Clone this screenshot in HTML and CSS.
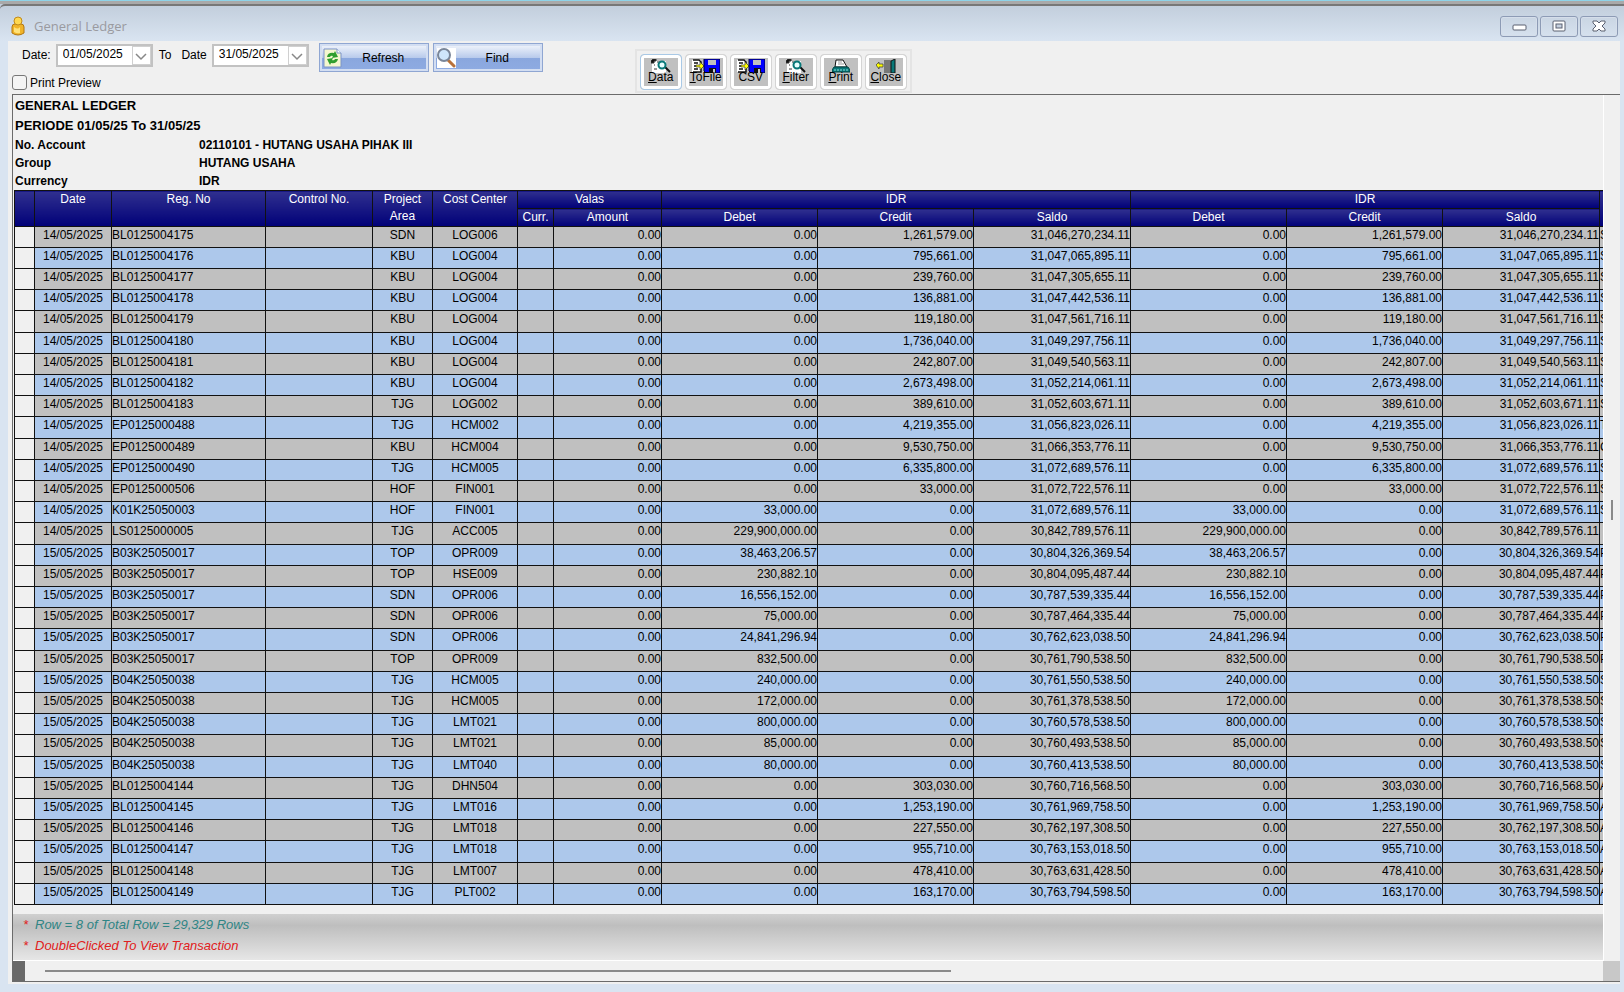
FILE: index.html
```
<!DOCTYPE html>
<html lang="en">
<head>
    <meta charset="UTF-8">
    <meta name="viewport" content="width=device-width, initial-scale=1.0">
    <title>General Ledger</title>
    <link rel="stylesheet" href="styles.css">
</head>
<body>
    <svg width="0" height="0" class="sprite">
        <symbol id="i-preview" viewBox="0 0 20 14">
            <path d="M1 4l3-2h11v12H1z" fill="#fff"/>
            <path d="M0 4V2l2-2h3v2H3v2zM6 3h3M3 6h1M3 10h3" fill="#111" stroke="#333"/>
            <path d="M14 8l5 5" stroke="#111" stroke-width="2"/>
            <circle cx="11" cy="6" r="3.5" fill="#e8ffff" stroke="#087878" stroke-width="2"/>
        </symbol>
        <symbol id="i-save" viewBox="0 0 28 14">
            <path d="M0 1h9v12H0z" fill="#fff"/>
            <path d="M1 1h6l2 2v10H1M2 4h4M2 7h4M2 10h4" fill="none" stroke="#111" stroke-width="1.5"/>
            <path d="M4 6h4V3l4 4-4 4V8H4z" fill="#ff0" stroke="#333" stroke-width=".7"/>
            <path d="M12 0h16v14H14l-2-2z" fill="#00f" stroke="#003"/>
            <path d="M16 1h8v5h-8z" fill="#c0c0c0"/>
            <path d="M17 9h7v5h-7z" fill="#111"/>
            <path d="M21 10h2v4h-2z" fill="#c8c8d0"/>
        </symbol>
        <symbol id="i-print" viewBox="0 0 18 14">
            <path d="M4 1h7l4 7H3z" fill="#fff" stroke="#111"/>
            <path d="M6 3h4M6 5h6" stroke="#999"/>
            <path d="M2 8h14l2 3v2H0v-2z" fill="#087878" stroke="#044"/>
            <path d="M2 11h14" stroke="#8dd" stroke-dasharray="2 1"/>
        </symbol>
        <symbol id="i-close" viewBox="0 0 20 14">
            <path d="M0 6l3-3v2h4v3H3v2z" fill="#ff0" stroke="#333" stroke-width=".7"/>
            <path d="M8 1h7v13H8z" fill="#777"/>
            <path d="M15 2l4-2v14h-4z" fill="#087878" stroke="#111"/>
        </symbol>
    </svg>

    <div class="window">
        <header class="titlebar">
            <svg class="app-icon" width="14" height="20" viewBox="0 0 14 20">
                <path d="M1 11Q1 8 4 8h6q3 0 3 3v6q-6 4-12 0z" fill="#f0b429" stroke="#b27712"/>
                <circle cx="7" cy="5" r="4" fill="#ffd84f" stroke="#c08a1c"/>
                <path d="M3 11q4 3 6 0v6q-3 1-6-1z" fill="#ffe27a"/>
            </svg>
            <h1>General Ledger</h1>
            <div class="win-buttons">
                <button type="button" aria-label="Minimize"><svg width="15" height="12" viewBox="0 0 15 12"><rect x="1" y="5" width="13" height="5" rx="1" fill="#fff" stroke="#5b6070"/></svg></button>
                <button type="button" aria-label="Restore"><svg width="15" height="12" viewBox="0 0 15 12"><rect x="1" y="1" width="12" height="10" rx="1" fill="#fff" stroke="#5b6070"/><rect x="4" y="4" width="6" height="4" fill="#c5d0df" stroke="#5b6070"/></svg></button>
                <button type="button" aria-label="Close"><svg width="15" height="12" viewBox="0 0 15 12"><path d="M1 1h4l2 2 2-2h4v2l-3 3 3 3v2H9L7 9l-2 2H1V9l3-3-3-3z" fill="#fff" stroke="#5b6070"/></svg></button>
            </div>
        </header>

        <main class="client">
            <div class="controls">
                <div class="filters">
                    <div class="filter-row">
                        <label for="dateFrom">Date:</label>
                        <span class="combo">
                            <input type="text" id="dateFrom" value="01/05/2025">
                            <button type="button" aria-label="Open start date"><svg width="12" height="8" viewBox="0 0 12 8"><path d="M1 1l5 5 5-5" fill="none" stroke="#888" stroke-width="1.5"/></svg></button>
                        </span>
                        <label for="dateTo" class="to"><span>To</span><span>Date</span></label>
                        <span class="combo">
                            <input type="text" id="dateTo" value="31/05/2025">
                            <button type="button" aria-label="Open end date"><svg width="12" height="8" viewBox="0 0 12 8"><path d="M1 1l5 5 5-5" fill="none" stroke="#888" stroke-width="1.5"/></svg></button>
                        </span>
                    </div>
                    <label class="preview"><input type="checkbox"> Print Preview</label>
                </div>
                <div class="actions">
                    <button type="button" class="action">
                        <svg width="19" height="20" viewBox="0 0 19 20">
                            <path d="M1 1h13l4 4v14H1z" fill="#f4f7cf" stroke="#7d93c8"/>
                            <path d="M14 1v4h4" fill="#fff" stroke="#7d93c8"/>
                            <path d="M4 9q1-5 7-4l1-2 3 6-6 1 1-2q-2-1-3 1zM15 11q-1 5-7 4l-1 2-3-6 6-1-1 2q2 1 3-1z" fill="#2f9e2f"/>
                        </svg>
                        <span>Refresh</span>
                    </button>
                    <button type="button" class="action">
                        <svg width="19" height="20" viewBox="0 0 19 20">
                            <path d="M0 0h19v20H0z" fill="#fff"/>
                            <path d="M11 12l6 6" stroke="#b8713a" stroke-width="3" stroke-linecap="round"/>
                            <circle cx="7" cy="7" r="6" fill="#cfe6fb" stroke="#7a8699" stroke-width="2"/>
                        </svg>
                        <span>Find</span>
                    </button>
                </div>
                <div class="toolbar">
                    <button type="button" class="tool focused"><svg width="20" height="14"><use href="#i-preview"/></svg><span><u>D</u>ata</span></button>
                    <button type="button" class="tool"><svg width="28" height="14"><use href="#i-save"/></svg><span><u>T</u>oFile</span></button>
                    <button type="button" class="tool"><svg width="28" height="14"><use href="#i-save"/></svg><span>CSV</span></button>
                    <button type="button" class="tool"><svg width="20" height="14"><use href="#i-preview"/></svg><span><u>F</u>ilter</span></button>
                    <button type="button" class="tool"><svg width="18" height="14"><use href="#i-print"/></svg><span><u>P</u>rint</span></button>
                    <button type="button" class="tool"><svg width="20" height="14"><use href="#i-close"/></svg><span><u>C</u>lose</span></button>
                </div>
            </div>

            <div class="report">
                <div class="sheet">
                    <h2>GENERAL LEDGER</h2>
                    <h2>PERIODE 01/05/25 To 31/05/25</h2>
                    <dl class="info">
                        <dt>No. Account</dt><dd>02110101 - HUTANG USAHA PIHAK III</dd>
                        <dt>Group</dt><dd>HUTANG USAHA</dd>
                        <dt>Currency</dt><dd>IDR</dd>
                    </dl>
                    <table class="ledger">
                        <colgroup>
                            <col class="c-mark"><col class="c-date"><col class="c-reg"><col class="c-control"><col class="c-area"><col class="c-cost"><col class="c-curr"><col class="c-amount">
                            <col class="c-money"><col class="c-money"><col class="c-saldo"><col class="c-money"><col class="c-money"><col class="c-saldo">
                            <col class="c-desc">
                        </colgroup>
                        <thead>
                            <tr>
                                <th rowspan="2"></th>
                                <th rowspan="2">Date</th>
                                <th rowspan="2">Reg. No</th>
                                <th rowspan="2">Control No.</th>
                                <th rowspan="2">Project Area</th>
                                <th rowspan="2">Cost Center</th>
                                <th colspan="2">Valas</th>
                                <th colspan="3">IDR</th>
                                <th colspan="3">IDR</th>
                                <th rowspan="2"></th>
                            </tr>
                            <tr>
                                <th>Curr.</th><th>Amount</th>
                                <th>Debet</th><th>Credit</th><th>Saldo</th>
                                <th>Debet</th><th>Credit</th><th>Saldo</th>
                            </tr>
                        </thead>
                        <tbody id="rows"></tbody>
                    </table>
                    <footer class="notes">
                        <p class="count"><b>*</b>Row = 8 of Total Row = 29,329 Rows</p>
                        <p class="hint"><b>*</b>DoubleClicked To View Transaction</p>
                    </footer>
                </div>
                <div class="vscroll"><span></span></div>
                <div class="hscroll"><i></i><span></span></div>
                <div class="corner"></div>
            </div>
        </main>
    </div>

    <script>
        // date, reg. no, area, cost center, debet, credit, saldo, description
        const entries = `
14/05/2025|BL0125004175|SDN|LOG006|0.00|1,261,579.00|31,046,270,234.11|S
14/05/2025|BL0125004176|KBU|LOG004|0.00|795,661.00|31,047,065,895.11|S
14/05/2025|BL0125004177|KBU|LOG004|0.00|239,760.00|31,047,305,655.11|S
14/05/2025|BL0125004178|KBU|LOG004|0.00|136,881.00|31,047,442,536.11|S
14/05/2025|BL0125004179|KBU|LOG004|0.00|119,180.00|31,047,561,716.11|S
14/05/2025|BL0125004180|KBU|LOG004|0.00|1,736,040.00|31,049,297,756.11|S
14/05/2025|BL0125004181|KBU|LOG004|0.00|242,807.00|31,049,540,563.11|S
14/05/2025|BL0125004182|KBU|LOG004|0.00|2,673,498.00|31,052,214,061.11|S
14/05/2025|BL0125004183|TJG|LOG002|0.00|389,610.00|31,052,603,671.11|S
14/05/2025|EP0125000488|TJG|HCM002|0.00|4,219,355.00|31,056,823,026.11|T
14/05/2025|EP0125000489|KBU|HCM004|0.00|9,530,750.00|31,066,353,776.11|C
14/05/2025|EP0125000490|TJG|HCM005|0.00|6,335,800.00|31,072,689,576.11|S
14/05/2025|EP0125000506|HOF|FIN001|0.00|33,000.00|31,072,722,576.11|S
14/05/2025|K01K25050003|HOF|FIN001|33,000.00|0.00|31,072,689,576.11|S
14/05/2025|LS0125000005|TJG|ACC005|229,900,000.00|0.00|30,842,789,576.11|
15/05/2025|B03K25050017|TOP|OPR009|38,463,206.57|0.00|30,804,326,369.54|P
15/05/2025|B03K25050017|TOP|HSE009|230,882.10|0.00|30,804,095,487.44|P
15/05/2025|B03K25050017|SDN|OPR006|16,556,152.00|0.00|30,787,539,335.44|P
15/05/2025|B03K25050017|SDN|OPR006|75,000.00|0.00|30,787,464,335.44|P
15/05/2025|B03K25050017|SDN|OPR006|24,841,296.94|0.00|30,762,623,038.50|P
15/05/2025|B03K25050017|TOP|OPR009|832,500.00|0.00|30,761,790,538.50|P
15/05/2025|B04K25050038|TJG|HCM005|240,000.00|0.00|30,761,550,538.50|S
15/05/2025|B04K25050038|TJG|HCM005|172,000.00|0.00|30,761,378,538.50|S
15/05/2025|B04K25050038|TJG|LMT021|800,000.00|0.00|30,760,578,538.50|S
15/05/2025|B04K25050038|TJG|LMT021|85,000.00|0.00|30,760,493,538.50|S
15/05/2025|B04K25050038|TJG|LMT040|80,000.00|0.00|30,760,413,538.50|S
15/05/2025|BL0125004144|TJG|DHN504|0.00|303,030.00|30,760,716,568.50|A
15/05/2025|BL0125004145|TJG|LMT016|0.00|1,253,190.00|30,761,969,758.50|A
15/05/2025|BL0125004146|TJG|LMT018|0.00|227,550.00|30,762,197,308.50|A
15/05/2025|BL0125004147|TJG|LMT018|0.00|955,710.00|30,763,153,018.50|A
15/05/2025|BL0125004148|TJG|LMT007|0.00|478,410.00|30,763,631,428.50|A
15/05/2025|BL0125004149|TJG|PLT002|0.00|163,170.00|30,763,794,598.50|A`;

        document.getElementById('rows').innerHTML = entries.trim().split('\n').map(line => {
            const [date, reg, area, cost, debet, credit, saldo, desc] = line.split('|');
            const money = [debet, credit, saldo].map(v => `<td class="num">${v}</td>`).join('');
            return `<tr><td class="mark"></td><td class="mid">${date}</td><td>${reg}</td><td></td>` +
                `<td class="mid">${area}</td><td class="mid">${cost}</td><td></td><td class="num">0.00</td>` +
                `${money}${money}<td>${desc}</td></tr>`;
        }).join('');
    </script>
</body>
</html>
```

FILE: styles.css
```
* {
    box-sizing: border-box;
}
body {
    margin: 0;
    height: 100vh;
    background: #d9e4f1;
    color: #000;
    font-family: "Liberation Sans", Arial, sans-serif;
    font-size: 12px;
    overflow: hidden;
}
button, input {
    font: inherit;
    color: inherit;
}
button {
    padding: 0;
}
h1, h2, dl, dd, p {
    margin: 0;
}
.sprite {
    position: absolute;
}
.window {
    display: flex;
    flex-direction: column;
    height: 100%;
    padding: 4px 4px 8px 8px;
    background: linear-gradient(#8fd3e8 1px, #a9a9a9 1px, #a9a9a9 4px, #c1cddb 4px, #d9e4f1 41px);
}
/* title bar */
.titlebar {
    display: flex;
    align-items: center;
    height: 37px;
    padding: 5px 6px 0 11px;
    margin: 0 -4px 0 -8px;
    border-top: 2px solid #777;
    border-radius: 5px 0 0 0;
    flex: none;
}
.titlebar h1 {
    margin-left: 9px;
    color: #9a9a9f;
    font: 13px "Open Sans", "Noto Sans", sans-serif;
}
.win-buttons {
    display: flex;
    gap: 2px;
    margin-left: auto;
}
.win-buttons button {
    display: flex;
    align-items: center;
    justify-content: center;
    width: 38px;
    height: 21px;
    border: 1px solid #8d9bb5;
    border-radius: 3px;
    background: none;
    box-shadow: inset 0 0 0 1px #d5deea;
}
.client {
    display: flex;
    flex-direction: column;
    flex: 1;
    min-height: 0;
    padding: 0 0 2px 4px;
    background: #f0f0f0;
}
/* date filters and buttons */
.controls {
    display: flex;
    align-items: flex-start;
    height: 53px;
    flex: none;
}
.filter-row {
    display: flex;
    align-items: center;
    gap: 5px;
    height: 23px;
    margin: 3px 0 0 10px;
}
.filter-row label {
    padding-bottom: 2px;
}
.to {
    display: flex;
    gap: 10px;
    margin-left: 1px;
}
.combo {
    display: flex;
    width: 97px;
    height: 23px;
    border: 2px solid #c2c2c2;
    background: #fff;
}
.combo input {
    width: 74px;
    border: 0;
    padding: 0 0 3px 5px;
    background: none;
    outline: none;
}
.combo button {
    flex: 1;
    border: 1px solid #d0d0d0;
    background: #fff;
    padding-top: 3px;
}
.preview {
    display: flex;
    align-items: center;
    gap: 3px;
    margin-top: 8px;
}
.preview input {
    appearance: none;
    width: 15px;
    height: 15px;
    margin: 0;
    border: 1px solid #777;
    border-radius: 3px;
    background: #f4f4f4;
}
.actions {
    display: flex;
    gap: 4px;
    margin: 2px 0 0 10px;
}
.action {
    display: flex;
    align-items: center;
    width: 110px;
    height: 29px;
    padding: 0 3px;
    border: 1px solid #8fa6d2;
    background: linear-gradient(#f4f7fc, #b9cbec 50%, #8aa7de 52%, #8eabe2);
    box-shadow: inset 0 0 0 2px #d3def2;
}
.action span {
    flex: 1;
    text-align: center;
}
.toolbar {
    display: flex;
    gap: 3px;
    margin: 8px 0 0 92px;
    padding: 3px;
    border: 2px solid #e4e4e4;
    height: 44px;
}
.tool {
    display: flex;
    flex-direction: column;
    align-items: center;
    width: 42px;
    height: 36px;
    border: 1px solid #d4d4d4;
    border-radius: 4px;
    background: #c0c0c0;
    box-shadow: inset 0 0 0 3px #fff;
    padding-top: 4px;
}
.tool svg {
    flex: none;
}
.tool span {
    margin-top: -3px;
    line-height: 14px;
}
.tool.focused {
    border-color: #a9c9e6;
}
/* report area, with its scroll bars on the right and bottom */
.report {
    display: grid;
    grid-template-columns: minmax(0, 1fr) 17px;
    grid-template-rows: minmax(0, 1fr) 20px;
    flex: 1;
    min-height: 0;
    border: 1px solid #6b6b6b;
    border-width: 1px 0 1px 1px;
}
.sheet {
    display: flex;
    flex-direction: column;
    overflow: hidden;
    padding-top: 1px;
    border-bottom: 1px solid #fff;
}
.sheet h2 {
    padding-left: 2px;
    font-size: 13px;
    line-height: 20px;
}
.info {
    display: grid;
    grid-template-columns: 184px 1fr;
    padding-left: 2px;
    font-weight: bold;
    line-height: 18px;
}
.ledger {
    flex: none;
    width: 1704px;
    margin-left: 1px;
    table-layout: fixed;
    border-collapse: collapse;
}
.c-mark { width: 20px; }
.c-date { width: 77px; }
.c-reg { width: 154px; }
.c-control { width: 107px; }
.c-area { width: 60px; }
.c-cost { width: 85px; }
.c-curr { width: 36px; }
.c-amount { width: 108px; }
.c-money { width: 156px; }
.c-saldo { width: 157px; }
.ledger th, .ledger td {
    border: 1px solid #111;
    padding: 0;
    overflow: hidden;
    white-space: nowrap;
}
.ledger th {
    height: 18px;
    background: linear-gradient(#30308f, #000078);
    color: #fff;
    font-weight: normal;
    line-height: 17px;
    vertical-align: top;
    white-space: normal;
}
.ledger td {
    height: 21px;
    background: #c0c0c0;
    line-height: 16px;
    vertical-align: top;
}
.ledger tr:nth-child(5n) td {
    height: 22px;
}
.ledger tr:nth-child(even) td {
    background: #adc8eb;
}
.ledger tr td.mark {
    background: #f0f0f0;
}
.ledger .mid {
    text-align: center;
}
.ledger .num {
    text-align: right;
}
.notes {
    flex: 1;
    margin-top: 9px;
    padding-left: 10px;
    background: linear-gradient(#d0d0d0, #bebebe 25%, #e6e6e6);
    font-style: italic;
    font-size: 13px;
    line-height: 21px;
}
.notes b {
    display: inline-block;
    width: 12px;
    color: #e02020;
    font-weight: normal;
}
.count {
    color: #2f8585;
}
.hint {
    color: #e02020;
}
.vscroll {
    display: flex;
    align-items: center;
    justify-content: center;
    border-left: 1px solid #fff;
}
.vscroll span {
    width: 2px;
    height: 20px;
    background: #8a8a8a;
    margin-bottom: 36px;
}
.hscroll {
    display: flex;
    align-items: center;
}
.hscroll i {
    width: 12px;
    height: 20px;
    margin-right: 20px;
    background: #696969;
}
.hscroll span {
    width: 57%;
    height: 2px;
    background: #8a8a8a;
}
.corner {
    background: #c8c8c8;
}
```
